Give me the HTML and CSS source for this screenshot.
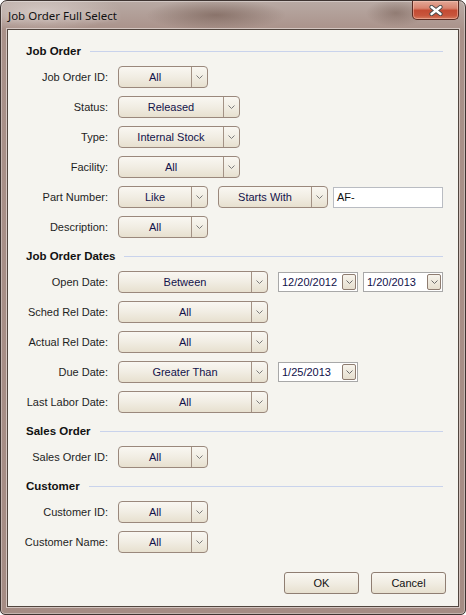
FILE: index.html
```html
<!DOCTYPE html>
<html>
<head>
<meta charset="utf-8">
<link rel="stylesheet" href="styles.css">
</head>
<body>
<div class="window">
  <div class="titlebar">
    <span class="title">Job Order Full Select</span>
    <div class="close">
      <svg width="14" height="11" viewBox="0 0 14 11">
        <path d="M2.5 2 L11.5 9 M11.5 2 L2.5 9" stroke="#4a4a4a" stroke-width="4.2" stroke-linecap="round"/>
        <path d="M2.5 2 L11.5 9 M11.5 2 L2.5 9" stroke="#ffffff" stroke-width="2.4" stroke-linecap="round"/>
      </svg>
    </div>
  </div>
  <div class="client">
    <section class="group">
      <div class="group-head"><span class="group-title">Job Order</span><span class="rule"></span></div>
      <div class="row">
        <span class="label">Job Order ID:</span>
        <div class="combo w-s"><span class="val">All</span><span class="btn"><svg width="7" height="5" viewBox="0 0 7 5"><polyline points="0.5,0.5 3.5,3.5 6.5,0.5" fill="none" stroke="#7a7a7a" stroke-width="1"/></svg></span></div>
      </div>
      <div class="row">
        <span class="label">Status:</span>
        <div class="combo w-m"><span class="val">Released</span><span class="btn"><svg width="7" height="5" viewBox="0 0 7 5"><polyline points="0.5,0.5 3.5,3.5 6.5,0.5" fill="none" stroke="#7a7a7a" stroke-width="1"/></svg></span></div>
      </div>
      <div class="row">
        <span class="label">Type:</span>
        <div class="combo w-m"><span class="val">Internal Stock</span><span class="btn"><svg width="7" height="5" viewBox="0 0 7 5"><polyline points="0.5,0.5 3.5,3.5 6.5,0.5" fill="none" stroke="#7a7a7a" stroke-width="1"/></svg></span></div>
      </div>
      <div class="row">
        <span class="label">Facility:</span>
        <div class="combo w-m"><span class="val">All</span><span class="btn"><svg width="7" height="5" viewBox="0 0 7 5"><polyline points="0.5,0.5 3.5,3.5 6.5,0.5" fill="none" stroke="#7a7a7a" stroke-width="1"/></svg></span></div>
      </div>
      <div class="row">
        <span class="label">Part Number:</span>
        <div class="combo w-s"><span class="val">Like</span><span class="btn"><svg width="7" height="5" viewBox="0 0 7 5"><polyline points="0.5,0.5 3.5,3.5 6.5,0.5" fill="none" stroke="#7a7a7a" stroke-width="1"/></svg></span></div>
        <div class="combo w-sw"><span class="val">Starts With</span><span class="btn"><svg width="7" height="5" viewBox="0 0 7 5"><polyline points="0.5,0.5 3.5,3.5 6.5,0.5" fill="none" stroke="#7a7a7a" stroke-width="1"/></svg></span></div>
        <div class="textbox">AF-</div>
      </div>
      <div class="row">
        <span class="label">Description:</span>
        <div class="combo w-s"><span class="val">All</span><span class="btn"><svg width="7" height="5" viewBox="0 0 7 5"><polyline points="0.5,0.5 3.5,3.5 6.5,0.5" fill="none" stroke="#7a7a7a" stroke-width="1"/></svg></span></div>
      </div>
    </section>

    <section class="group">
      <div class="group-head"><span class="group-title">Job Order Dates</span><span class="rule"></span></div>
      <div class="row">
        <span class="label">Open Date:</span>
        <div class="combo w-l"><span class="val">Between</span><span class="btn"><svg width="7" height="5" viewBox="0 0 7 5"><polyline points="0.5,0.5 3.5,3.5 6.5,0.5" fill="none" stroke="#7a7a7a" stroke-width="1"/></svg></span></div>
        <div class="datebox"><span class="dval">12/20/2012</span><span class="dbtn"><svg width="7" height="5" viewBox="0 0 7 5"><polyline points="0.5,0.5 3.5,3.5 6.5,0.5" fill="none" stroke="#6a6a6a" stroke-width="1"/></svg></span></div>
        <div class="datebox"><span class="dval">1/20/2013</span><span class="dbtn"><svg width="7" height="5" viewBox="0 0 7 5"><polyline points="0.5,0.5 3.5,3.5 6.5,0.5" fill="none" stroke="#6a6a6a" stroke-width="1"/></svg></span></div>
      </div>
      <div class="row">
        <span class="label">Sched Rel Date:</span>
        <div class="combo w-l"><span class="val">All</span><span class="btn"><svg width="7" height="5" viewBox="0 0 7 5"><polyline points="0.5,0.5 3.5,3.5 6.5,0.5" fill="none" stroke="#7a7a7a" stroke-width="1"/></svg></span></div>
      </div>
      <div class="row">
        <span class="label">Actual Rel Date:</span>
        <div class="combo w-l"><span class="val">All</span><span class="btn"><svg width="7" height="5" viewBox="0 0 7 5"><polyline points="0.5,0.5 3.5,3.5 6.5,0.5" fill="none" stroke="#7a7a7a" stroke-width="1"/></svg></span></div>
      </div>
      <div class="row">
        <span class="label">Due Date:</span>
        <div class="combo w-l"><span class="val">Greater Than</span><span class="btn"><svg width="7" height="5" viewBox="0 0 7 5"><polyline points="0.5,0.5 3.5,3.5 6.5,0.5" fill="none" stroke="#7a7a7a" stroke-width="1"/></svg></span></div>
        <div class="datebox"><span class="dval">1/25/2013</span><span class="dbtn"><svg width="7" height="5" viewBox="0 0 7 5"><polyline points="0.5,0.5 3.5,3.5 6.5,0.5" fill="none" stroke="#6a6a6a" stroke-width="1"/></svg></span></div>
      </div>
      <div class="row">
        <span class="label">Last Labor Date:</span>
        <div class="combo w-l"><span class="val">All</span><span class="btn"><svg width="7" height="5" viewBox="0 0 7 5"><polyline points="0.5,0.5 3.5,3.5 6.5,0.5" fill="none" stroke="#7a7a7a" stroke-width="1"/></svg></span></div>
      </div>
    </section>

    <section class="group">
      <div class="group-head"><span class="group-title">Sales Order</span><span class="rule"></span></div>
      <div class="row">
        <span class="label">Sales Order ID:</span>
        <div class="combo w-s"><span class="val">All</span><span class="btn"><svg width="7" height="5" viewBox="0 0 7 5"><polyline points="0.5,0.5 3.5,3.5 6.5,0.5" fill="none" stroke="#7a7a7a" stroke-width="1"/></svg></span></div>
      </div>
    </section>

    <section class="group">
      <div class="group-head"><span class="group-title">Customer</span><span class="rule"></span></div>
      <div class="row">
        <span class="label">Customer ID:</span>
        <div class="combo w-s"><span class="val">All</span><span class="btn"><svg width="7" height="5" viewBox="0 0 7 5"><polyline points="0.5,0.5 3.5,3.5 6.5,0.5" fill="none" stroke="#7a7a7a" stroke-width="1"/></svg></span></div>
      </div>
      <div class="row">
        <span class="label">Customer Name:</span>
        <div class="combo w-s"><span class="val">All</span><span class="btn"><svg width="7" height="5" viewBox="0 0 7 5"><polyline points="0.5,0.5 3.5,3.5 6.5,0.5" fill="none" stroke="#7a7a7a" stroke-width="1"/></svg></span></div>
      </div>
    </section>

    <div class="actions">
      <button class="pbtn">OK</button>
      <button class="pbtn">Cancel</button>
    </div>
  </div>
</div>
</body>
</html>
```

FILE: styles.css
```css
html, body {
  margin: 0;
  padding: 0;
  background: #ffffff;
}

.window {
  width: 466px;
  height: 615px;
  box-sizing: border-box;
  border: 1px solid #3e3431;
  border-radius: 7px 7px 5px 5px;
  overflow: hidden;
  background:
    radial-gradient(ellipse 70px 16px at 215px 14px, rgba(105, 80, 70, 0.55), rgba(105, 80, 70, 0)),
    radial-gradient(ellipse 30px 14px at 395px 12px, rgba(105, 80, 70, 0.45), rgba(105, 80, 70, 0)),
    radial-gradient(ellipse 80px 20px at 40px 10px, rgba(235, 228, 225, 0.55), rgba(235, 228, 225, 0)),
    linear-gradient(to bottom, #b8aaa4 0px, #a99189 30px, #a58c84 100%);
  box-shadow: inset 0 0 0 1px rgba(255, 255, 255, 0.35);
  font-family: "Liberation Sans", Arial, sans-serif;
  font-size: 11px;
  color: #1c1c1c;
}

.titlebar {
  height: 28px;
  display: flex;
  align-items: flex-start;
}

.title {
  margin: 8px 0 0 7px;
  font-family: "Noto Sans", "Liberation Sans", sans-serif;
  font-size: 11.5px;
  line-height: 14px;
  color: #111111;
  text-shadow: 0 0 6px rgba(255, 255, 255, 0.6);
}

.close {
  margin-left: auto;
  margin-right: 6px;
  width: 47px;
  height: 19px;
  box-sizing: border-box;
  border: 1px solid #5c2b22;
  border-top: none;
  border-radius: 0 0 5px 5px;
  background: linear-gradient(to bottom, #e3a897 0%, #d8846f 40%, #c44b33 52%, #c8553c 80%, #d47a5e 100%);
  box-shadow: inset 0 0 0 1px rgba(255, 210, 195, 0.45);
  display: flex;
  align-items: center;
  justify-content: center;
}

.client {
  margin-left: 6px;
  width: 452px;
  height: 578px;
  box-sizing: border-box;
  border: 1px solid #52463f;
  box-shadow: 0 0 0 1px rgba(240, 232, 228, 0.6);
  background: #f5f4ef;
  padding-top: 13px;
  display: flex;
  flex-direction: column;
}

.group {
  padding-right: 15px;
}

.group + .group {
  margin-top: 10px;
}

.group-head {
  height: 16px;
  display: flex;
  align-items: center;
  padding-left: 18px;
  margin-bottom: 7px;
}

.group-title {
  font-weight: bold;
  font-size: 11.5px;
  color: #111111;
  white-space: nowrap;
}

.rule {
  flex: 1;
  height: 1px;
  margin-left: 9px;
  background: #c9d3ec;
}

.row {
  height: 22px;
  display: flex;
  align-items: center;
}

.row + .row {
  margin-top: 8px;
}

.label {
  width: 100px;
  text-align: right;
  margin-right: 10px;
  color: #1e1e1e;
  white-space: nowrap;
}

.combo {
  height: 22px;
  box-sizing: border-box;
  border: 1px solid #9a887c;
  border-radius: 4px;
  background: linear-gradient(to bottom, #f9f7f2 0%, #f1ede3 50%, #e7e0cf 100%);
  display: flex;
  color: #12124a;
}

.combo .val {
  flex: 1;
  text-align: center;
  line-height: 20px;
  white-space: nowrap;
}

.combo .btn {
  width: 15px;
  border-left: 1px solid #a39285;
  display: flex;
  align-items: center;
  justify-content: center;
}

.w-s { width: 90px; }
.w-m { width: 122px; }
.w-l { width: 150px; }
.w-sw { width: 110px; margin-left: 10px; }

.textbox {
  width: 110px;
  height: 21px;
  box-sizing: border-box;
  margin-left: 5px;
  border: 1px solid #b9bcc2;
  background: #ffffff;
  padding-left: 3px;
  line-height: 19px;
  color: #111111;
}

.datebox {
  width: 80px;
  height: 20px;
  box-sizing: border-box;
  margin-left: 10px;
  border: 1px solid #a8a8a8;
  background: #ffffff;
  display: flex;
  align-items: center;
  padding-left: 3px;
  padding-right: 1px;
  color: #10104a;
}

.datebox + .datebox {
  margin-left: 5px;
}

.dval {
  flex: 1;
  white-space: nowrap;
}

.dbtn {
  width: 14px;
  height: 16px;
  box-sizing: border-box;
  border: 1px solid #8e7c70;
  border-radius: 2px;
  background: linear-gradient(to bottom, #f7f4ec, #e6dfcf);
  display: flex;
  align-items: center;
  justify-content: center;
}

.actions {
  margin-top: auto;
  padding: 0 12px 12px 0;
  display: flex;
  justify-content: flex-end;
  gap: 12px;
}

.pbtn {
  width: 75px;
  height: 22px;
  box-sizing: border-box;
  border: 1px solid #8f7e72;
  border-radius: 3px;
  background: linear-gradient(to bottom, #f9f7f2 0%, #f1ede3 50%, #e7e0cf 100%);
  font-family: "Liberation Sans", Arial, sans-serif;
  font-size: 11px;
  color: #111111;
  padding: 0;
}
```
